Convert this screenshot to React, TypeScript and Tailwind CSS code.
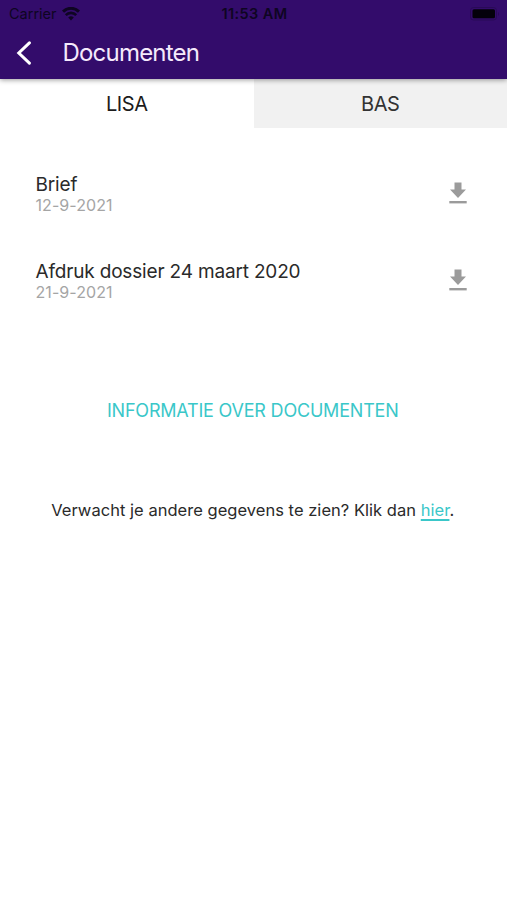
import { useState } from "react";

interface DocumentItem {
  title: string;
  date: string;
}

const documents: DocumentItem[] = [
  { title: "Brief", date: "12-9-2021" },
  { title: "Afdruk dossier 24 maart 2020", date: "21-9-2021" },
];

const tabs = ["LISA", "BAS"];

function WifiIcon() {
  return (
    <svg width="18" height="14" viewBox="0 0 18 14" fill="none" stroke="#0e0522">
      <path d="M1 4.6a11.4 11.4 0 0 1 16 0" strokeWidth="3" />
      <path d="M3.8 8.1a7.3 7.3 0 0 1 10.4 0" strokeWidth="2.6" />
      <path d="M9 13.4 6.2 10.5a4 4 0 0 1 5.6 0Z" fill="#0e0522" stroke="none" />
    </svg>
  );
}

function BatteryIcon() {
  return (
    <svg width="30" height="14" viewBox="0 0 30 14">
      <rect x="0.5" y="0.5" width="26" height="12.5" rx="3" fill="none" stroke="#290a57" />
      <rect x="2.5" y="2.2" width="22.5" height="9" rx="1.5" fill="#04010b" />
      <path d="M28 5v4c1.4-.6 1.4-3.4 0-4Z" fill="#290a57" />
    </svg>
  );
}

function DownloadIcon() {
  return (
    <svg width="18" height="22" viewBox="0 0 18 22" fill="#9b9b9b">
      <path d="M5.5 0.4h7v7H17L9 15.9 1 7.4h4.5Z" />
      <path d="M0.3 19h17.4v2.4H0.3Z" />
    </svg>
  );
}

export default function App() {
  const [activeTab, setActiveTab] = useState("LISA");

  return (
    <div className="h-[900px] w-[507px] overflow-hidden bg-white font-['Inter',sans-serif] text-[#2a2a2a]">
      <header className="relative z-10 h-[79px] bg-[#330c6b] shadow-[0_1px_5px_rgba(0,0,0,0.4)]">
        <div className="grid h-7 grid-cols-3 items-center pr-[7px] pl-[9px] text-[#0e0522]">
          <div className="flex items-center gap-[5px]">
            <span className="text-[14.5px]">Carrier</span>
            <WifiIcon />
          </div>
          <span className="text-center text-[14.5px] font-semibold tracking-[0.4px]">11:53 AM</span>
          <div className="flex justify-end">
            <BatteryIcon />
          </div>
        </div>
        <div className="flex h-[49px] items-center pl-[15.5px]">
          <button aria-label="Terug" className="w-[47px]">
            <svg
              width="16"
              height="24"
              viewBox="0 0 16 24"
              fill="none"
              stroke="#fff"
              strokeWidth="3"
              strokeLinecap="round"
            >
              <path d="M13.4 1.9 2.8 12l10.6 10.1" />
            </svg>
          </button>
          <h1 className="text-[24px] leading-none tracking-[-0.8px] text-[#f5eafc]">Documenten</h1>
        </div>
      </header>

      <nav className="flex h-[49px]">
        {tabs.map((tab) => (
          <button
            key={tab}
            onClick={() => setActiveTab(tab)}
            className={`flex-1 text-[20px] tracking-[-0.4px] ${activeTab === tab ? "bg-white text-[#1c1c1c]" : "bg-[#f1f1f1] text-[#333]"}`}
          >
            {tab}
          </button>
        ))}
      </nav>

      <ul className="pt-[45px] pr-10 pl-[35.5px]">
        {documents.map((doc) => (
          <li key={doc.title} className="flex h-[87px] justify-between">
            <div>
              <p className="text-[19px] leading-[23px] tracking-[-0.17px]">{doc.title}</p>
              <p className="text-[16px] leading-[19px] tracking-[0.08px] text-[#a5a5a5]">{doc.date}</p>
            </div>
            <button aria-label="Download" className="mt-[9px] self-start">
              <DownloadIcon />
            </button>
          </li>
        ))}
      </ul>

      <div className="mt-[52px] pr-[1.5px] text-center">
        <button className="text-[18px] leading-6 tracking-[-0.2px] text-[#3ac7c9]">INFORMATIE OVER DOCUMENTEN</button>
      </div>

      <p className="mt-[75px] pr-[1.5px] text-center text-[16.5px] leading-6 tracking-[0.03px]">
        Verwacht je andere gegevens te zien? Klik dan{" "}
        <a href="#" className="text-[#3ac7c9] underline decoration-[1.5px] underline-offset-[3px]">hier</a>.
      </p>
    </div>
  );
}
